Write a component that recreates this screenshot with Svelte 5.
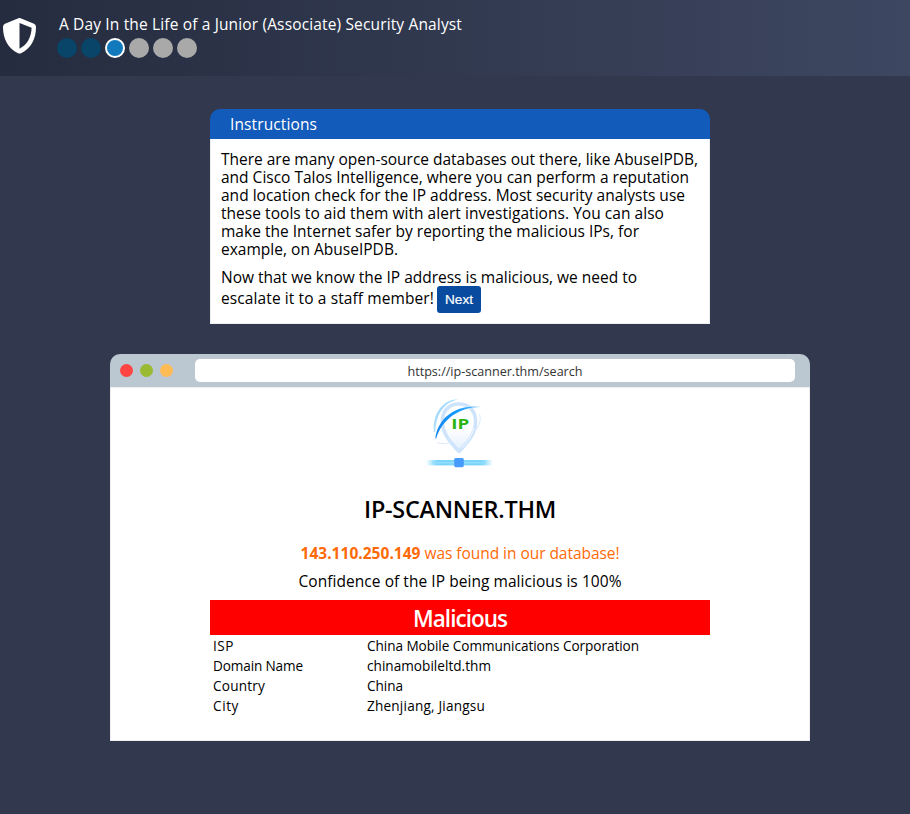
<script>
  const steps = ['done', 'done', 'current', 'todo', 'todo', 'todo'];
  const paragraph = [
    ['There are many open-source databases out there, like AbuseIPDB,', 477],
    ['and Cisco Talos Intelligence, where you can perform a reputation', 468],
    ['and location check for the IP address. Most security analysts use', 464],
    ['these tools to aid them with alert investigations. You can also', 443],
    ['make the Internet safer by reporting the malicious IPs, for', 418],
    ['example, on AbuseIPDB.', 177]
  ];
  const details = [
    ['ISP', 21, 'China Mobile Communications Corporation', 272],
    ['Domain Name', 90, 'chinamobileltd.thm', 124],
    ['Country', 52, 'China', 36],
    ['City', 26, 'Zhenjiang, Jiangsu', 118]
  ];

  // Tracks a single line of text out to a fixed measure.
  function fit(node, width) {
    const natural = node.getBoundingClientRect().width;
    node.style.letterSpacing = `${(width - natural) / node.textContent.length}px`;
  }
</script>

<header>
  <svg class="shield" viewBox="0 0 34 36" width="34" height="36" aria-hidden="true">
    <path fill="#fff" fill-rule="evenodd" d="M15.4.3Q16.5-.2 17.6.3L31 5.8Q33 6.8 33 9C33 21 28 30.5 18 35.2Q16.5 35.9 15 35.2C5 30.5 0 21 0 9Q0 6.8 2 5.8ZM16.5 4.9V30.7C24 27 28.4 19.4 28.6 9.8Z" />
  </svg>
  <div class="progress">
    <div class="title"><span use:fit={403}>A Day In the Life of a Junior (Associate) Security Analyst</span></div>
    <div class="steps">
      {#each steps as step}<i class={step}></i>{/each}
    </div>
  </div>
</header>

<main>
  <section class="card">
    <div class="card-head"><span use:fit={87}>Instructions</span></div>
    <div class="card-body">
      <p>
        {#each paragraph as [line, width]}
          <span class="line"><span use:fit={width}>{line}</span></span>
        {/each}
      </p>
      <p class="second">
        <span class="line"><span use:fit={416}>Now that we know the IP address is malicious, we need to</span></span>
        <span class="action"><span use:fit={213}>escalate it to a staff member!</span><button>Next</button></span>
      </p>
    </div>
  </section>

  <section class="browser">
    <div class="bar">
      <div class="lights"><i class="red"></i><i class="green"></i><i class="amber"></i></div>
      <div class="url"><span use:fit={175}>https://ip-scanner.thm/search</span></div>
    </div>
    <div class="page">
      <svg class="logo" viewBox="0 0 80 80" width="80" height="80" aria-hidden="true">
        <defs>
          <linearGradient id="pin" x1="0" y1="0" x2="0" y2="1">
            <stop offset="0.5" stop-color="#fff" /><stop offset="1" stop-color="#e4effd" />
          </linearGradient>
          <linearGradient id="arc" gradientUnits="userSpaceOnUse" x1="15" y1="45" x2="62" y2="10">
            <stop offset="0" stop-color="#1580e8" /><stop offset="0.65" stop-color="#159bff" /><stop offset="1" stop-color="#62bbff" />
          </linearGradient>
          <linearGradient id="rail" x1="0" x2="1">
            <stop offset="0" stop-color="#7bd5fb" stop-opacity="0" /><stop offset="0.16" stop-color="#7bd5fb" />
            <stop offset="0.84" stop-color="#7bd5fb" /><stop offset="1" stop-color="#7bd5fb" stop-opacity="0" />
          </linearGradient>
        </defs>
        <path d="M39 52.4C34 46.5 22.4 37 22.4 22.5C22.4 11.5 29 5 39 5S55.6 11.5 55.6 22.5C55.6 37 44 46.5 39 52.4Z" fill="url(#pin)" stroke="#cee4fd" stroke-width="3.6" stroke-linejoin="round" />
        <path d="M42 49C47 43 52 37 54 29" fill="none" stroke="#fff" stroke-width="0.8" />
        <path d="M14 33C12 13 24 0 39 .2C26 2.5 16 13 15.2 33Z" fill="#a9dcfc" />
        <path d="M17 43.5C21 45 27 45 32 43.5M56 31C60 26 61 20 59.5 15" fill="none" stroke="#dcebfc" stroke-width="1" />
        <path d="M15.4 39.5C17 20 36 4 61.5 8C40 7.5 22 20 16.2 39.5Z" fill="url(#arc)" />
        <text x="40.3" y="30.4" text-anchor="middle" textLength="18" lengthAdjust="spacingAndGlyphs">IP</text>
        <rect x="6" y="61" width="67" height="5.4" fill="url(#rail)" />
        <rect x="12" y="63" width="54" height="1.4" fill="#94ddfc" />
        <rect x="34.2" y="59" width="9.6" height="9.2" rx="1.6" fill="#469bfb" />
      </svg>
      <h2><span use:fit={192}>IP-SCANNER.THM</span></h2>
      <div class="found"><b use:fit={120}>143.110.250.149</b><span use:fit={195}>was found in our database!</span></div>
      <div class="confidence"><span use:fit={323}>Confidence of the IP being malicious is 100%</span></div>
      <div class="verdict"><span use:fit={94}>Malicious</span></div>
      <dl>
        {#each details as [name, nameWidth, value, valueWidth]}
          <dt><span use:fit={nameWidth}>{name}</span></dt>
          <dd><span use:fit={valueWidth}>{value}</span></dd>
        {/each}
      </dl>
    </div>
  </section>
</main>

<style>
  :global(body) {
    margin: 0;
    background: #32394e;
  }
  :global(#app) {
    font: 15.5px/18px 'Open Sans', 'Noto Sans', sans-serif;
    color: #000;
    min-height: 814px;
  }
  span, b { white-space: nowrap; }
  p, h2, dl, dd { margin: 0; }
  header {
    display: flex;
    height: 76px;
    box-sizing: border-box;
    padding-left: 3px;
    background: linear-gradient(90deg, #252c3f, #3e4761);
    color: #fff;
  }
  .shield { margin-top: 18px; }
  .progress { padding: 14px 0 0 20px; }
  .title { height: 20px; line-height: 20px; padding-left: 2px; }
  .steps { display: flex; gap: 4px; margin-top: 4px; }
  .steps i {
    box-sizing: border-box;
    width: 20px;
    height: 20px;
    border-radius: 50%;
    background: #a9a9a9;
  }
  .steps .done { background: #084569; }
  .steps .current { background: #107abc; border: 2px solid #fff; }

  main { display: flex; flex-direction: column; align-items: center; padding: 33px 0 0 10px; }
  .card { width: 500px; height: 215px; }
  .card-head {
    height: 30px;
    line-height: 30px;
    padding-left: 20px;
    border-radius: 10px 10px 0 0;
    background: #125bba;
    color: #fff;
  }
  .card-body {
    box-sizing: border-box;
    height: 185px;
    padding: 11px 0 0 10px;
    border: solid #eee;
    border-width: 0 1px 1px;
    background: #fff;
  }
  .line { display: block; height: 18px; }
  .second { margin-top: 10px; }
  .action { display: flex; gap: 3px; line-height: 24px; }
  button {
    width: 44px;
    height: 27px;
    padding: 0;
    border: 0;
    border-radius: 3px;
    background: #084b9f;
    color: #fff;
    font: 13.6px/27px 'Liberation Sans', Arial, sans-serif;
    -webkit-text-stroke: 0.2px #fff;
  }

  .browser { width: 700px; height: 387px; margin-top: 30px; }
  .bar {
    display: flex;
    align-items: flex-start;
    height: 33px;
    border-radius: 10px 10px 0 0;
    background: #bbc7d1;
  }
  .lights { display: flex; gap: 7px; padding: 10px 22px 0 10px; }
  .lights i { width: 13px; height: 13px; border-radius: 50%; }
  .red { background: #ff4442; }
  .green { background: #9abb31; }
  .amber { background: #ffbb54; }
  .url {
    box-sizing: border-box;
    width: 600px;
    height: 23px;
    margin-top: 5px;
    padding-top: 1px;
    border-radius: 5px;
    background: #fff;
    color: #333;
    font-size: 12.6px;
    line-height: 23px;
    text-align: center;
  }
  .page {
    display: flex;
    flex-direction: column;
    align-items: center;
    box-sizing: border-box;
    height: 354px;
    padding-top: 11px;
    border: 1px solid #eee;
    background: #fff;
  }
  .logo { flex: none; }
  .logo text { font: 700 15px 'Open Sans', sans-serif; fill: #2bb512; }
  h2 { height: 30px; margin-top: 15px; font-size: 23.4px; line-height: 30px; font-weight: 600; }
  .found { display: flex; gap: 4px; height: 20px; margin-top: 19px; line-height: 20px; color: #ff6a08; }
  .confidence { height: 20px; margin-top: 8px; line-height: 20px; }
  .verdict {
    box-sizing: border-box;
    width: 500px;
    height: 35px;
    margin-top: 9px;
    padding-top: 1px;
    background: #f00;
    color: #fff;
    font-size: 22.5px;
    font-weight: 600;
    line-height: 35px;
    text-align: center;
  }
  dl {
    display: grid;
    grid-template-columns: 154px 343px;
    grid-auto-rows: 20px;
    box-sizing: border-box;
    width: 500px;
    padding: 1px 0 0 3px;
    font-size: 13.6px;
    line-height: 20px;
  }
</style>
